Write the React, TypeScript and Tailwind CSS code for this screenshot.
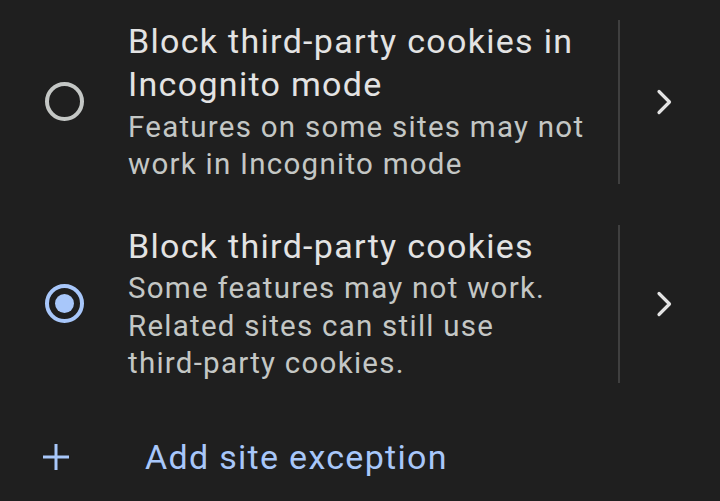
const RadioOff = () => (
    <div className="w-[39px] h-[39px] rounded-full border-[4px] border-[#c4c7c5]"></div>
);

const RadioOn = () => (
    <div className="w-[39px] h-[39px] rounded-full border-[4px] border-[#a8c7fa] flex items-center justify-center">
        <div className="w-[19px] h-[19px] rounded-full bg-[#a8c7fa]"></div>
    </div>
);

const Chevron = () => (
    <svg width="24" height="30" viewBox="0 0 24 30" fill="none">
        <path d="M7 4.5 L17.5 15 L7 25.5" stroke="#e3e3e3" strokeWidth="3.2" strokeLinecap="round" strokeLinejoin="round" />
    </svg>
);

type RowProps = { selected: boolean; title: string; lines: React.ReactNode };

const OptionRow = ({ selected, title, lines }: RowProps) => (
    <div className="flex items-stretch">
        <div className="w-[128px] flex-shrink-0 flex items-center justify-center">
            {selected ? <RadioOn /> : <RadioOff />}
        </div>
        <div className="w-[470px] flex-shrink-0">
            <div className="text-[34px] leading-[43px] tracking-[1.3px] text-[#e3e3e3]">{title}</div>
            <div className="pt-[2.5px] text-[29.5px] leading-[37.5px] tracking-[1.25px] text-[#c4c7c5]">{lines}</div>
        </div>
        <div className="w-[20px] flex-shrink-0"></div>
        <div className="w-[2px] bg-[#3f3f3f] flex-shrink-0"></div>
        <div className="w-[88px] flex-shrink-0 flex items-center justify-center">
            <Chevron />
        </div>
    </div>
);

export default function App() {
    return (
        <div className="w-[720px] h-[501px] bg-[#1f1f1f] overflow-hidden pt-[20px]" style={{ fontFamily: "Roboto, sans-serif" }}>
            <div className="space-y-[41px]">
                <OptionRow
                    selected={false}
                    title="Block third-party cookies in Incognito mode"
                    lines="Features on some sites may not work in Incognito mode"
                />
                <OptionRow
                    selected={true}
                    title="Block third-party cookies"
                    lines={
                        <>
                            Some features may not work. Related sites can still use{" "}
                            <span className="whitespace-nowrap">third-party</span> cookies.
                        </>
                    }
                />
            </div>
            <div className="flex items-center mt-[53px]">
                <div className="w-[112px] flex-shrink-0 flex justify-start pl-[42px]">
                    <svg width="28" height="28" viewBox="0 0 28 28">
                        <path d="M14 1 V27 M1 14 H27" stroke="#a8c7fa" strokeWidth="3" />
                    </svg>
                </div>
                <div className="pl-[33px] text-[34px] leading-[43px] tracking-[1.3px] text-[#a8c7fa]">Add site exception</div>
            </div>
        </div>
    );
}
